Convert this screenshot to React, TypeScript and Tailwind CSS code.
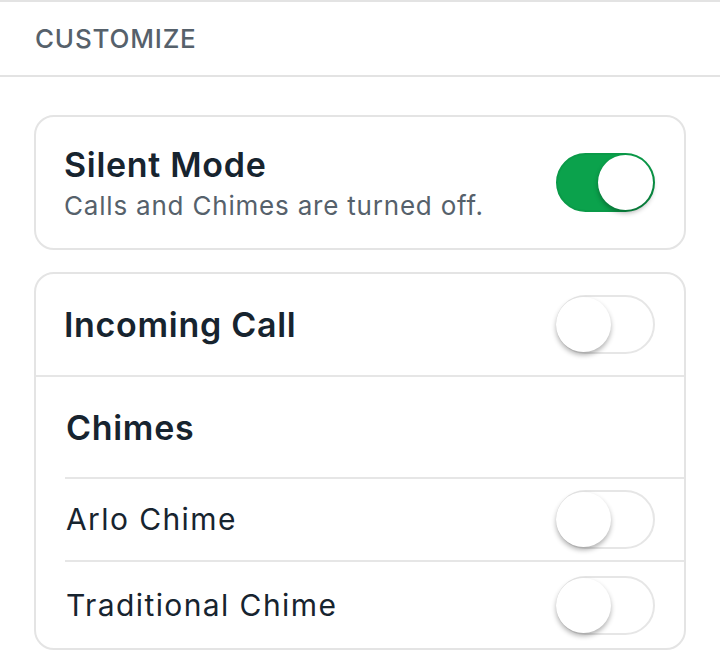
import React, { useState } from "react";

function Toggle({ on, onChange }: { on: boolean; onChange: () => void }) {
  return (
    <button
      onClick={onChange}
      className={`relative h-[59px] w-[99px] shrink-0 rounded-full border-2 transition ${
        on ? "border-[#0a9a48] bg-[#0ba24c]" : "border-[#e6e6e6] bg-white"
      }`}
    >
      <span
        className={`absolute top-[0px] h-[55px] w-[55px] rounded-full bg-white shadow-[0_3px_5px_rgba(0,0,0,0.3)] transition ${
          on ? "left-[40px]" : "left-[-2px]"
        }`}
      />
    </button>
  );
}

export default function App() {
  const [silent, setSilent] = useState(true);
  const [incoming, setIncoming] = useState(false);
  const [arlo, setArlo] = useState(false);
  const [traditional, setTraditional] = useState(false);

  return (
    <div className="min-h-[653px] w-[720px] overflow-hidden bg-white font-['Inter',sans-serif] text-[#17242f]">
      <div className="flex h-[77px] items-center border-y-2 border-[#e3e3e3] px-[35px]">
        <span className="text-[26px] font-medium tracking-[0.8px] text-[#56616b]">CUSTOMIZE</span>
      </div>

      <div className="px-[34px] pt-[38px]">
        <div className="flex h-[135px] items-center justify-between rounded-[20px] border-2 border-[#e4e4e4] pl-[28px] pr-[29px]">
          <div className="pt-[2px]">
            <div className="text-[34px] font-semibold leading-[40px] tracking-[0.7px]">Silent Mode</div>
            <div className="mt-[5px] text-[26px] leading-[32px] tracking-[0.8px] text-[#56616b]">
              Calls and Chimes are turned off.
            </div>
          </div>
          <Toggle on={silent} onChange={() => setSilent(!silent)} />
        </div>

        <div className="mt-[22px] rounded-[20px] border-2 border-[#e4e4e4]">
          <div className="flex h-[103px] items-center justify-between border-b-2 border-[#e6e6e6] pl-[28px] pr-[29px]">
            <span className="text-[34px] font-semibold tracking-[0.7px]">Incoming Call</span>
            <Toggle on={incoming} onChange={() => setIncoming(!incoming)} />
          </div>
          <div className="flex h-[100px] items-center pl-[30px]">
            <span className="text-[34px] font-semibold tracking-[0.7px]">Chimes</span>
          </div>
          <div className="ml-[29px]">
            <div className="flex h-[83px] items-center justify-between border-t-2 border-[#e6e6e6] pl-[1px] pr-[29px]">
              <span className="text-[30px] tracking-[1.4px]">Arlo Chime</span>
              <Toggle on={arlo} onChange={() => setArlo(!arlo)} />
            </div>
            <div className="flex h-[88px] items-center justify-between border-t-2 border-[#e6e6e6] pl-[1px] pr-[29px]">
              <span className="text-[30px] tracking-[1.4px]">Traditional Chime</span>
              <Toggle on={traditional} onChange={() => setTraditional(!traditional)} />
            </div>
          </div>
        </div>
      </div>
    </div>
  );
}
